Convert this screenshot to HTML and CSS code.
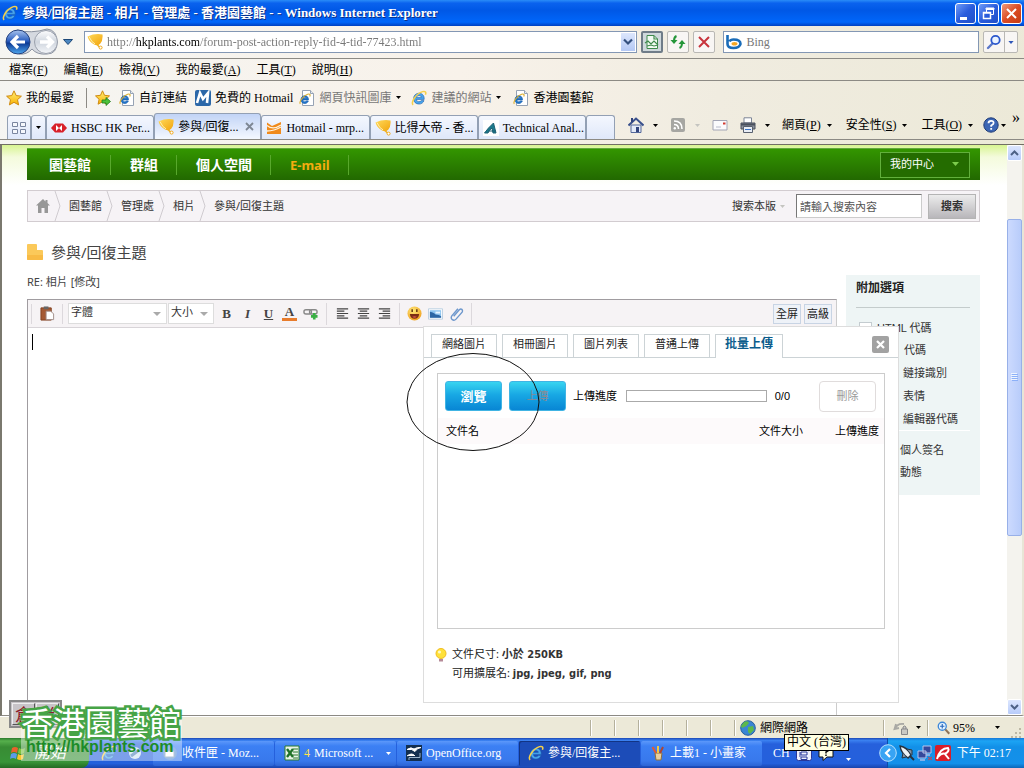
FILE: index.html
```html
<!DOCTYPE html>
<html lang="zh-Hant">
<head>
<meta charset="utf-8">
<title>參與/回復主題 - 相片 - 管理處 - 香港園藝館</title>
<link rel="stylesheet" href="styles.css">
</head>
<body>
<svg class="sprite" width="0" height="0" aria-hidden="true">
  <defs>
    <linearGradient id="gBlue" x1="0" y1="0" x2="0" y2="1"><stop offset="0" stop-color="#a9c4ee"/><stop offset=".45" stop-color="#2c5fc0"/><stop offset=".55" stop-color="#0c3a96"/><stop offset="1" stop-color="#4fa8ee"/></linearGradient>
    <linearGradient id="gGrey" x1="0" y1="0" x2="0" y2="1"><stop offset="0" stop-color="#fdfdfe"/><stop offset=".5" stop-color="#cfd5de"/><stop offset="1" stop-color="#f4f6f9"/></linearGradient>
    <linearGradient id="gGold" x1="0" y1="0" x2="1" y2="1"><stop offset="0" stop-color="#ffd95a"/><stop offset="1" stop-color="#f2a40c"/></linearGradient>
    <linearGradient id="gStar" x1="0" y1="0" x2="0" y2="1"><stop offset="0" stop-color="#fff07a"/><stop offset="1" stop-color="#f9b100"/></linearGradient>
    <radialGradient id="gSmile" cx=".4" cy=".3" r=".8"><stop offset="0" stop-color="#ffe878"/><stop offset="1" stop-color="#ee9a18"/></radialGradient>
    <symbol id="ie" viewBox="0 0 16 16"><path d="M13.200 9.400H5.400c.1 1.500 1.200 2.300 2.600 2.300 1 0 1.800-.4 2.200-1.100h2.800c-.8 2.300-2.700 3.500-5 3.500-3.200 0-5.400-2.200-5.400-5.400 0-3.200 2.200-5.500 5.400-5.500 3.400 0 5.400 2.300 5.200 6.200zM5.500 7.400h4.800C10.200 6.200 9.300 5.500 8 5.500c-1.300 0-2.200.7-2.500 1.900z" fill="#48a4ec" stroke="#1b5fae" stroke-width=".6"/><path d="M2.200 14.800C-.8 13 5 3.500 11.500 1.600c3-.8 4 .8 2.900 3.200" fill="none" stroke="#f6d04a" stroke-width="1.500"/></symbol>
    <symbol id="iedoc" viewBox="0 0 16 16"><path d="M3.500.5h8l3 3v12h-11z" fill="#fff" stroke="#97a3b4"/><path d="M11.500.5v3h3" fill="#e8edf4" stroke="#97a3b4"/><g transform="translate(0 3) scale(.75)"><path d="M12.600 9.200H5.200c.1 1.700 1.200 2.600 2.600 2.600 1 0 1.700-.4 2.200-1.100h2.400c-.8 2.100-2.500 3.300-4.700 3.300-2.900 0-5-2.100-5-5.100 0-3 2.100-5.200 5-5.200 3.100 0 5 2.100 4.900 5.500zM5.300 7.400h4.800C10 6.200 9.100 5.500 7.800 5.500c-1.300 0-2.200.7-2.500 1.900z" fill="#1f78cc" stroke="#1b5fae"/><path d="M1.800 14.600C-.5 12.500 5.500 3.500 11.500 1.700c3-.9 3.900.6 2.800 2.900" fill="none" stroke="#dcae2c" stroke-width="1.500"/></g></symbol>
    <symbol id="pot" viewBox="0 0 16 16"><path d="M.5 2.500Q8-1 15.500.5q.6 6-2.300 9.200-2.900 2.700-6 .8Q2 8 .5 2.500z" fill="url(#gGold)"/><path d="M2 2.600q3 6.500 6 7.200" fill="none" stroke="#fff0b0" stroke-width="1"/><path d="M10 10.500l2.500 2.500" stroke="#f0b020" stroke-width="1.500"/><circle cx="13.600" cy="13.600" r="1.500" fill="#fff" stroke="#f0a818"/></symbol>
    <symbol id="star" viewBox="0 0 16 16"><path d="M8 .8l2.200 4.800 5.200.6-3.900 3.500 1.100 5.200L8 12.300l-4.600 2.600 1.100-5.200L.6 6.200l5.200-.6z" fill="url(#gStar)" stroke="#cf8a10" stroke-linejoin="round"/></symbol>
    <symbol id="arrow" viewBox="0 0 7 4"><path d="M0 0h7L3.500 4z" fill="currentColor"/></symbol>
    <symbol id="lens" viewBox="0 0 16 16"><path d="M2 14l4.500-4.500" stroke="#5a77c8" stroke-width="2.400" stroke-linecap="round"/><circle cx="9.500" cy="6" r="4.200" fill="#eaf3ff" stroke="#2b57cc" stroke-width="1.800"/></symbol>
  </defs>
</svg>

<header class="titlebar">
  <svg class="ico"><use href="#ie"/></svg>
  <h1 class="window-title">參與/回復主題 - 相片 - 管理處 - 香港園藝館 - - Windows Internet Explorer</h1>
  <div class="winbtns">
    <button class="winbtn" aria-label="最小化"><svg viewBox="0 0 19 19"><path d="M4 13h7v3H4z" fill="#fff"/></svg></button>
    <button class="winbtn" aria-label="還原"><svg viewBox="0 0 19 19"><path d="M7.500 8V4.500h7v6H12M7 4h8v1.500H7z" fill="none" stroke="#fff"/><path d="M4.500 8.500h7v6h-7zM4 9h8" fill="none" stroke="#fff" stroke-width="1.500"/></svg></button>
    <button class="winbtn close" aria-label="關閉"><svg viewBox="0 0 19 19"><path d="M5 5l9 9M14 5l-9 9" stroke="#fff" stroke-width="2"/></svg></button>
  </div>
</header>

<div class="chrome">
  <div class="addressrow">
    <svg class="navbtns" viewBox="0 0 72 28" role="img" aria-label="上一頁 下一頁"><path d="M12 2q14 4 30-1 10 1 10 13T42 26q-10 1-15-5-5 6-13 5z" fill="#d5d9e0" stroke="#8c93a0"/><circle cx="13" cy="14" r="12" fill="url(#gBlue)" stroke="#26427e"/><circle cx="41" cy="14" r="11.500" fill="url(#gGrey)" stroke="#9aa0ac"/><path d="M20 14H8M13 8l-6 6 6 6" fill="none" stroke="#fff" stroke-width="3.200"/><path d="M35 14h11M42 8.500l5.500 5.500-5.500 5.500" fill="none" stroke="#fff" stroke-width="3.400"/><path d="M58.500 11.500h9L63 16.500z" fill="#4a86c0" stroke="#1d4878"/></svg>
    <div class="field url">
      <svg class="ico"><use href="#pot"/></svg>
      <input class="url-input" aria-label="網址" value="http://hkplants.com/forum-post-action-reply-fid-4-tid-77423.html">
      <button class="urldrop" aria-label="網址清單"><svg viewBox="0 0 10 8"><path d="M1 1.500l4 4 4-4" fill="none" stroke="#34507e" stroke-width="2.200"/></svg></button>
    </div>
    <button class="toolbtn pressed" aria-label="相容性檢視"><svg class="ico" viewBox="0 0 16 16"><path d="M3 1.500h7l3.500 3.500v9.500H3z" fill="#f2fbf2" stroke="#3f8a4d"/><path d="M10 1.500V5h3.500M1 9l3-2 3 3 3-3 4 4M3 12l4-1 3 1 4-1" fill="none" stroke="#3f8a4d" stroke-width="1.200"/></svg></button>
    <button class="toolbtn" aria-label="重新整理"><svg class="ico" viewBox="0 0 16 16"><path d="M6.500 2Q4 3 4 7" fill="none" stroke="#24963a" stroke-width="2"/><path d="M.5 6h7L4 10zM8.500 10h7L12 6z" fill="#24963a"/><path d="M9.500 14Q12 13 12 9" fill="none" stroke="#24963a" stroke-width="2"/></svg></button>
    <button class="toolbtn" aria-label="停止"><svg class="ico" viewBox="0 0 16 16"><path d="M3 3l10 10M13 3L3 13" stroke="#c8343c" stroke-width="2"/></svg></button>
    <div class="field search">
      <svg class="ico" viewBox="0 0 16 16"><path d="M1.500 1v9q0 4 6 4t7-4q0-4.500-7-4.500-3 0-4 2" fill="none" stroke="#1a6cb8" stroke-width="2.600"/><ellipse cx="8.500" cy="9.800" rx="3" ry="1.800" fill="#f5a623"/></svg>
      <input class="plain-input" aria-label="搜尋" placeholder="Bing">
    </div>
    <div class="toolbtn split"><button class="bare" aria-label="搜尋"><svg class="ico"><use href="#lens"/></svg></button><button class="bare drop" aria-label="搜尋選項"><svg class="arrow blue"><use href="#arrow"/></svg></button></div>
  </div>

  <nav class="menubar">
    <button>檔案(<u>F</u>)</button><button>編輯(<u>E</u>)</button><button>檢視(<u>V</u>)</button><button>我的最愛(<u>A</u>)</button><button>工具(<u>T</u>)</button><button>說明(<u>H</u>)</button>
  </nav>

  <div class="favbar">
    <button class="fav first"><svg class="ico"><use href="#star"/></svg>我的最愛</button>
    <button class="fav" aria-label="加到我的最愛列"><svg class="ico" viewBox="0 0 16 16"><path d="M7.500.8l2 4.500 5 .6-3.700 3.400 1 4.900-4.300-2.500-4.400 2.500 1-4.900L.5 5.900l5-.6z" fill="url(#gStar)" stroke="#cf8a10"/><path d="M7 10h4V7.500l4.500 4-4.500 4V13H7z" fill="#4cc23a" stroke="#1f7c1c" stroke-width=".8"/></svg></button>
    <a class="fav" href="#"><svg class="ico"><use href="#iedoc"/></svg>自訂連結</a>
    <a class="fav" href="#"><svg class="ico" viewBox="0 0 16 16"><rect width="16" height="16" rx="2" fill="#2b67a8"/><path d="M2 13L5 3l3 6 5-6-1 10" fill="none" stroke="#fff" stroke-width="2.600"/></svg>免費的 Hotmail</a>
    <a class="fav dim" href="#"><svg class="ico"><use href="#iedoc"/></svg>網頁快訊圖庫<svg class="arrow"><use href="#arrow"/></svg></a>
    <a class="fav dim" href="#"><svg class="ico"><use href="#ie"/></svg>建議的網站<svg class="arrow"><use href="#arrow"/></svg></a>
    <a class="fav" href="#"><svg class="ico"><use href="#iedoc"/></svg>香港園藝館</a>
  </div>

  <div class="tabrow">
    <div class="tabs">
      <button class="tab quick" aria-label="快速索引標籤"><svg class="ico" viewBox="0 0 16 16"><path d="M1.500 2.500h5v4h-5zM9.500 2.500h5v4h-5zM1.500 9.500h5v4h-5zM9.500 9.500h5v4h-5z" fill="#f6f8fc" stroke="#7a86a0"/></svg></button>
      <button class="tab qdrop" aria-label="索引標籤清單"><svg class="arrow"><use href="#arrow"/></svg></button>
      <button class="tab"><svg class="ico" viewBox="0 0 16 16"><path d="M4 3.500h8l4 4.500-4 4.500H4L0 8z" fill="#d8202a"/><path d="M5 5l6 6V5l-6 6z" fill="#fff"/></svg><span>HSBC HK Per...</span></button>
      <button class="tab current"><svg class="ico"><use href="#pot"/></svg><span>參與/回復...</span><svg class="tabx" viewBox="0 0 9 9"><path d="M1 1l7 7M8 1L1 8" stroke="#7e8794" stroke-width="1.800"/></svg></button>
      <button class="tab"><svg class="ico" viewBox="0 0 16 16"><path d="M1 2.500l5 3.500 9-4v12H1z" fill="#f08a1c"/><path d="M1 5.500q6 5 14-.5M1 11q7 0 14-4" stroke="#fff2dc" fill="none" stroke-width="1.300"/></svg><span>Hotmail - mrp...</span></button>
      <button class="tab"><svg class="ico"><use href="#pot"/></svg><span>比得大帝 - 香...</span></button>
      <button class="tab"><svg class="ico" viewBox="0 0 16 16"><path d="M0 0h16v16H0z" fill="#fff"/><path d="M1.500 13Q5 8 10.500 3l2.500 10h-3L9 8q-3 2-4 5zM5 11h8" fill="#1c7a8c" stroke="#1c6074"/></svg><span>Technical Anal...</span></button>
      <button class="tab new" aria-label="新索引標籤"></button>
    </div>
    <div class="commands">
      <button class="cmd" aria-label="首頁"><svg class="ico" viewBox="0 0 16 16"><path d="M3 8h10v7.500H3z" fill="#e3eaf8" stroke="#54689a"/><path d="M.5 8.500L8 1.500l7.500 7" fill="none" stroke="#39508c" stroke-width="2"/><path d="M3 1h2v4H3zM8 10h3v5H8z" fill="#32447c"/></svg><svg class="arrow"><use href="#arrow"/></svg></button>
      <button class="cmd" aria-label="摘要"><svg class="ico" viewBox="0 0 16 16"><rect x="1" y="1" width="14" height="14" rx="2" fill="#a6a6a2"/><path d="M4 4q8 0 8 8M4 7.500q4.500 0 4.500 4.500" fill="none" stroke="#fff" stroke-width="1.600"/><circle cx="4.800" cy="11.300" r="1.200" fill="#fff"/></svg><svg class="arrow pale"><use href="#arrow"/></svg></button>
      <button class="cmd" aria-label="讀取郵件"><svg class="ico" viewBox="0 0 16 16"><path d="M1 3.500h14v9.500H1z" fill="#fbfbfd" stroke="#a3a5b5"/><path d="M11 5.500h2.500v2H11z" fill="#d23a30"/><path d="M4 10h5" stroke="#b9bccb"/></svg></button>
      <button class="cmd" aria-label="列印"><svg class="ico" viewBox="0 0 16 16"><path d="M4 .8h7.500V6H4z" fill="#fff" stroke="#7c8596"/><path d="M1 6h14v6H1z" fill="#8c929c" stroke="#4a515e"/><path d="M1 6.500h14v2H1z" fill="#4a515e"/><path d="M3.500 9.500h9v6h-9z" fill="#e9eef6" stroke="#59616f"/><path d="M5 12.500h6" stroke="#3a74c8"/></svg><svg class="arrow"><use href="#arrow"/></svg></button>
      <button class="cmd"><span>網頁(<u>P</u>)</span><svg class="arrow"><use href="#arrow"/></svg></button>
      <button class="cmd"><span>安全性(<u>S</u>)</span><svg class="arrow"><use href="#arrow"/></svg></button>
      <button class="cmd"><span>工具(<u>O</u>)</span><svg class="arrow"><use href="#arrow"/></svg></button>
      <button class="cmd help" aria-label="說明"><svg class="ico" viewBox="0 0 16 16"><circle cx="8" cy="8" r="7.200" fill="#3c66b4" stroke="#1f3c78"/><path d="M5.500 6.200q0-2.400 2.600-2.400t2.500 2.200Q10.600 7.300 8.200 8.500v1.300M8.200 11v1.800" fill="none" stroke="#fff" stroke-width="1.800"/></svg><svg class="arrow"><use href="#arrow"/></svg></button>
      <button class="more" aria-label="更多">»</button>
    </div>
  </div>
</div>

<div class="viewport">
  <main class="page">
    <nav class="sitenav">
      <a href="#">園藝館</a><a href="#">群組</a><a href="#">個人空間</a><a class="mail" href="#">E-mail</a>
      <button class="mycenter">我的中心<svg class="arrow"><use href="#arrow"/></svg></button>
    </nav>
    <div class="crumbbar">
      <svg class="home" viewBox="0 0 14 14"><path d="M7 0L0 6.500h2V14h3.500V9h3v5H12V6.500h2L11.500 4V1h-2v1.500z" fill="#979797"/></svg>
      <svg class="sep" viewBox="0 0 7 30"><path d="M1 0l5 15-5 15" fill="none" stroke="#cfcbd0"/></svg>
      <a href="#">園藝館</a>
      <svg class="sep" viewBox="0 0 7 30"><path d="M1 0l5 15-5 15" fill="none" stroke="#cfcbd0"/></svg>
      <a href="#">管理處</a>
      <svg class="sep" viewBox="0 0 7 30"><path d="M1 0l5 15-5 15" fill="none" stroke="#cfcbd0"/></svg>
      <a href="#">相片</a>
      <svg class="sep" viewBox="0 0 7 30"><path d="M1 0l5 15-5 15" fill="none" stroke="#cfcbd0"/></svg>
      <span>參與/回復主題</span>
      <form class="sitesearch">
        <button type="button" class="scope">搜索本版<svg class="arrow pale"><use href="#arrow"/></svg></button>
        <input aria-label="搜索內容" placeholder="請輸入搜索內容">
        <button type="button" class="go">搜索</button>
      </form>
    </div>

    <div class="columns">
      <section class="composer">
        <h2><svg class="note" viewBox="0 0 16 16"><path d="M1 0h8q1 0 1 1v5h5q1 0 1 1v8q0 1-1 1H1q-1 0-1-1V1q0-1 1-1z" fill="#fbc95a"/><path d="M0 11h16v4q0 1-1 1H1q-1 0-1-1z" fill="#f8bb45"/></svg>參與/回復主題</h2>
        <p class="re">RE: 相片 [<a href="#">修改</a>]</p>
        <div class="editor">
          <div class="toolbar">
            <button class="tb paste" aria-label="貼上"><svg class="ico" viewBox="0 0 16 16"><path d="M1 2h11v13H1z" fill="#a55a34" stroke="#82401f"/><path d="M4 .5h5v3H4z" fill="#666"/><path d="M6.500 5.500h5l3 3v6h-8z" fill="#fff" stroke="#a08d88"/></svg></button>
            <label class="sel font"><select aria-label="字體"><option>字體</option></select></label>
            <label class="sel size"><select aria-label="大小"><option>大小</option></select></label>
            <button class="tb"><b>B</b></button>
            <button class="tb"><i>I</i></button>
            <button class="tb"><u>U</u></button>
            <button class="tb color">A</button>
            <button class="tb" aria-label="插入連結"><svg class="ico" viewBox="0 0 16 16"><rect x="1" y="4" width="8" height="4.500" rx="2.200" fill="none" stroke="#888" stroke-width="1.500"/><rect x="7" y="4" width="8" height="4.500" rx="2.200" fill="none" stroke="#888" stroke-width="1.500"/><path d="M8.500 11h7M12 7.500v7" stroke="#3aaf44" stroke-width="2.800"/></svg></button>
            <span class="line wide"></span>
            <button class="tb" aria-label="靠左"><svg class="ico" viewBox="0 0 16 16"><path d="M2 3h12M2 5.500h8M2 8h12M2 10.500h8M2 13h12" stroke="#444" stroke-width="1.300"/></svg></button>
            <button class="tb" aria-label="置中"><svg class="ico" viewBox="0 0 16 16"><path d="M2 3h12M4 5.500h8M2 8h12M4 10.500h8M2 13h12" stroke="#444" stroke-width="1.300"/></svg></button>
            <button class="tb" aria-label="靠右"><svg class="ico" viewBox="0 0 16 16"><path d="M2 3h12M6 5.500h8M2 8h12M6 10.500h8M2 13h12" stroke="#444" stroke-width="1.300"/></svg></button>
            <span class="line"></span>
            <button class="tb" aria-label="表情"><svg class="ico" viewBox="0 0 16 16"><circle cx="8" cy="8" r="7.500" fill="url(#gSmile)"/><path d="M3 8.500h10q-.5 5-5 5t-5-5z" fill="#7c2d12"/><path d="M5.500 11.500q2.500-1 5 0-2.500 2-5 0z" fill="#e2574c"/><path d="M5.500 3.500v3M10.500 3.500v3" stroke="#5a2c0a" stroke-width="1.500"/></svg></button>
            <button class="tb" aria-label="圖片"><svg class="ico" viewBox="0 0 16 16"><path d="M.5 3h15v11H.5z" fill="#fff" stroke="#b9cde0"/><path d="M2 4.500h12v8H2z" fill="#8cc4f0"/><path d="M2 12.500V6q5 1 6 3 4 0 6 2v1.500z" fill="#2c66a4"/><path d="M8 6h5v2H8z" fill="#e8f5ff"/></svg></button>
            <button class="tb" aria-label="附件"><svg class="ico" viewBox="0 0 16 16"><path d="M5 11l6-7q1.500-1.500 2.700-.4T14 6.500L7.500 14q-2 2-4 .5T3 10.500L9.500 3" fill="none" stroke="#6d97cc" stroke-width="1.500"/></svg></button>
            <span class="line"></span>
            <div class="modes"><button>全屏</button><button>高級</button></div>
          </div>
          <textarea class="message" aria-label="內容"></textarea>
          <span class="caret"></span>

          <div class="dialog">
            <div class="dtabs">
              <button>網絡圖片</button><button>相冊圖片</button><button>圖片列表</button><button>普通上傳</button><button class="on">批量上傳</button>
              <button class="x" aria-label="關閉"><svg viewBox="0 0 17 17"><rect width="17" height="17" rx="2" fill="#a2a2a2"/><path d="M5 5l7 7M12 5l-7 7" stroke="#fff" stroke-width="2.200"/></svg></button>
            </div>
            <div class="upload">
              <div class="urow">
                <button class="blue-btn">瀏覽</button>
                <button class="blue-btn off">上傳</button>
                <span class="ulabel">上傳進度</span>
                <span class="bar" role="progressbar" aria-label="上傳進度"></span>
                <span class="count">0/0</span>
                <button class="del">刪除</button>
              </div>
              <table class="files">
                <thead><tr><th class="name">文件名</th><th class="fsize">文件大小</th><th class="prog">上傳進度</th></tr></thead>
              </table>
            </div>
            <div class="tips">
              <svg class="bulb" viewBox="0 0 12 14"><circle cx="6" cy="5.500" r="5" fill="#ffe13a" stroke="#f0bc20"/><circle cx="4.500" cy="4" r="1.600" fill="#fff9c4"/><path d="M4 11h4v2.500H4z" fill="#b58a98"/></svg>
              <p>文件尺寸: <b>小於 250KB</b><br>可用擴展名: <b>jpg, jpeg, gif, png</b></p>
            </div>
          </div>
          <svg class="ring" viewBox="0 0 134 98"><ellipse cx="67" cy="49" rx="66" ry="48.500" fill="none" stroke="#111"/></svg>
        </div>
      </section>

      <aside class="options">
        <h3>附加選項</h3>
        <label class="first"><input type="checkbox">HTML 代碼</label>
        <label class="r2">代碼</label>
        <label>鏈接識別</label>
        <label>表情</label>
        <label>編輯器代碼</label>
        <div class="more-opts"><label>個人簽名</label><label>動態</label></div>
      </aside>
    </div>
  </main>
  <div class="scrollbar">
    <button aria-label="向上"><svg viewBox="0 0 9 6"><path d="M1 5l3.500-3.500L8 5" fill="none" stroke="#4d6185" stroke-width="2"/></svg></button>
    <div class="track"><div class="thumb"><svg viewBox="0 0 7 8"><path d="M0 .5h6M0 2.500h6M0 4.500h6M0 6.500h6" stroke="#eef4fe"/><path d="M1 1.500h6M1 3.500h6M1 5.500h6M1 7.500h6" stroke="#8cb0f8"/></svg></div></div>
    <button aria-label="向下"><svg viewBox="0 0 9 6"><path d="M1 1l3.500 3.500L8 1" fill="none" stroke="#4d6185" stroke-width="2"/></svg></button>
  </div>
</div>

<footer class="statusbar">
  <span class="cell"></span><span class="cell"></span><span class="cell"></span><span class="cell"></span><span class="cell"></span><span class="cell"></span>
  <span class="cell zone"><svg class="ico" viewBox="0 0 16 16"><circle cx="8" cy="8" r="7.300" fill="#3a85d4" stroke="#285f9e"/><path d="M4 2q4-2 5 1L6.500 6 2 8 1 6zM8 7l5-1 1 4-4 4-2-2z" fill="#5cb84c"/></svg>網際網路</span>
  <span class="cell lock"><svg class="ico" viewBox="0 0 16 16"><path d="M2 9q2-6 9-5M3 4L1.500 9 6 8" fill="none" stroke="#a9a9a4" stroke-width="1.800"/><path d="M8.500 9h6v5.500h-6zM10 9V7q1.500-2 3 0v2" fill="#c9c9c4" stroke="#87878a"/></svg><svg class="arrow"><use href="#arrow"/></svg></span>
  <span class="cell zoom"><svg class="ico" viewBox="0 0 16 16"><path d="M9 9l5 5.500" stroke="#8f7358" stroke-width="2.400"/><circle cx="6" cy="6" r="4.600" fill="#e4f3ff" stroke="#3b86d8" stroke-width="1.500"/><path d="M3.500 6h5M6 3.500v5" stroke="#2766bc" stroke-width="1.300"/></svg>95%<svg class="arrow"><use href="#arrow"/></svg></span>
  <svg class="grip" viewBox="0 0 11 11"><path d="M9 1h2v2H9zM5 5h2v2H5zM9 5h2v2H9zM1 9h2v2H1zM5 9h2v2H5zM9 9h2v2H9z" fill="#bdb9a6"/></svg>
</footer>

<footer class="taskbar">
  <button class="start"><svg class="flag" viewBox="0 0 18 18"><path d="M2 4q3-2 6 0L7 9Q4 7 1 9z" fill="#e8622c"/><path d="M9 4q3 2 6 0l-1 5q-3 2-6 0z" fill="#7fc241"/><path d="M1 10q3-2 6 0l-1 5q-3-2-6 0z" fill="#5b9bea"/><path d="M8 10q3 2 6 0l-1 5q-3 2-6 0z" fill="#f8c52c"/></svg><i>開始</i></button>
  <div class="quicklaunch"><svg class="ico"><use href="#ie"/></svg><svg class="ico" viewBox="0 0 16 16"><circle cx="8" cy="8" r="6" fill="#cde3f4"/><path d="M4 11l8-6" stroke="#4c80ba" stroke-width="3"/></svg></div>
  <button class="task"><svg class="ico" viewBox="0 0 16 16"><circle cx="8" cy="8" r="7" fill="#5a91d8"/><path d="M3 6h9v6H3z" fill="#fff" stroke="#839cbd"/></svg><span>收件匣 - Moz...</span></button>
  <button class="task"><svg class="ico" viewBox="0 0 16 16"><path d="M1 1h14v14H1z" fill="#e8f3e6" stroke="#2b7b31"/><path d="M9 4h5M9 7h5M9 10h5M9 13h5" stroke="#2b7b31"/><path d="M3 4l6 8M9 4l-6 8" stroke="#207228" stroke-width="2.400"/></svg><b>4</b><span>Microsoft ...</span><svg class="arrow"><use href="#arrow"/></svg></button>
  <button class="task"><svg class="ico" viewBox="0 0 16 16"><path d="M0 0h16v16H0z" fill="#132f50"/><path d="M1 4.500q4-3 7-.5 3-2 7-1.500-4 .5-6 4-3-3-8-2zM1 11q5-4 8 0" fill="#fff" stroke="#fff"/><path d="M3 15v-2.500h11V8" fill="none" stroke="#9cb4cc"/></svg><span>OpenOffice.org</span></button>
  <button class="task active"><svg class="ico"><use href="#ie"/></svg><span>參與/回復主...</span></button>
  <button class="task"><svg class="ico" viewBox="0 0 16 16"><path d="M5 8h7l-1 7H6z" fill="#e7cfa0" stroke="#8f703c"/><path d="M6 8L2.500 2" stroke="#e35a30" stroke-width="2"/><path d="M8 8V1" stroke="#f0c840" stroke-width="2"/><path d="M10 8l3-6" stroke="#b04630" stroke-width="2"/></svg><span>上載1 - 小畫家</span></button>
  <div class="lang"><span>CH</span><svg class="ico" viewBox="0 0 16 16"><rect x=".5" y=".5" width="15" height="15" rx="2" fill="#eef0fc" stroke="#27379a"/><path d="M8 2L3 6M8 2l5 4M5 7h6v3H5zM5 12h6v2.500H5zM4 7v5" fill="none" stroke="#27379a"/></svg><svg class="ico" viewBox="0 0 16 16"><path d="M1 1h14v11H9l-4 3.500V12H1z" fill="#ffffe6" stroke="#111"/><path d="M5.500 5q0-2 2.500-2t2.500 2Q10.500 6 8 7v1.500M8 9.500V11" fill="none" stroke="#111" stroke-width="1.500"/></svg><svg class="arrow"><use href="#arrow"/></svg></div>
  <div class="tray">
    <svg class="chev" viewBox="0 0 18 18"><circle cx="9" cy="9" r="8.300" fill="#38a4f4" stroke="#b7e1fd"/><path d="M11 5L7 9l4 4" fill="none" stroke="#fff" stroke-width="2.200"/></svg>
    <svg class="ico" viewBox="0 0 16 16"><path d="M1 1q7 1 11 9l-3 3Q2 8 1 1z" fill="#eef3f7" stroke="#26323e" stroke-width="1.400"/><path d="M4 8l-1 5 4-1M8 4l5 1v5" fill="#8594a4" stroke="#26323e"/><path d="M11 11l4 4" stroke="#26323e" stroke-width="2"/></svg>
    <svg class="ico" viewBox="0 0 16 16"><path d="M6 1h8v7H6zM1 6h8v7H1z" fill="#34489c" stroke="#b9c5ec"/><path d="M3 15h5M9 10h4" stroke="#a9bbe8" stroke-width="1.500"/><path d="M11 12l4 3M15 12l-4 3" stroke="#e23a36"/></svg>
    <svg class="ico" viewBox="0 0 16 16"><rect width="16" height="16" rx="2" fill="#d81e28"/><path d="M2 14Q5 3 13 3q2 3-3 6l4 5M3 12q4-5 8-3" fill="none" stroke="#fff" stroke-width="2"/></svg>
    <time>下午 02:17</time>
  </div>
</footer>

<div class="ime"><span>倉</span><span>半</span></div>
<div class="watermark"><strong>香港園藝館</strong><em>http://hkplants.com</em></div>
<div class="tooltip" role="tooltip">中文 (台灣)</div>
</body>
</html>
```
FILE: styles.css
```css
* { box-sizing: border-box; }
body {
  margin: 0;
  height: 100vh;
  display: flex;
  flex-direction: column;
  position: relative;
  overflow: hidden;
  font: 12px/16px "Liberation Serif", "Noto Sans CJK TC", serif;
  color: #000;
  background: #fff;
}
button, input, select, textarea { font: inherit; color: inherit; margin: 0; padding: 0; }
button { background: none; border: 0; white-space: nowrap; }
a { color: inherit; text-decoration: none; }
h1, h2, h3, p { margin: 0; font-weight: normal; }
.sprite { position: absolute; }
.ico { width: 16px; height: 16px; flex: none; display: block; }
.arrow { width: 5px; height: 3px; flex: none; color: #000; }
.arrow.blue { color: #2f57b8; width: 6px; }
.arrow.pale { color: #c4c4c0; }

.titlebar {
  height: 26px;
  flex: none;
  display: flex;
  align-items: center;
  gap: 4px;
  padding: 0 2px;
  background: linear-gradient(#2a8cf8, #0a62ee 12%, #0058e6 40%, #0066fa 85%, #0040c0);
  color: #fff;
}
.window-title { flex: 1; font-size: 13px; line-height: 18px; font-weight: bold; white-space: nowrap; text-shadow: 1px 1px #0b2f87; }
.winbtns { display: flex; gap: 2px; }
.winbtn { width: 21px; height: 21px; border: 1px solid #fff; border-radius: 3px; background: linear-gradient(135deg, #6f9cf8, #2a5cdc 50%, #2050c8); }
.winbtn svg { width: 19px; height: 19px; display: block; }
.winbtn.close { background: linear-gradient(135deg, #f09a7c, #dc4c24 50%, #c43c14); }

.chrome { flex: none; background: linear-gradient(100deg, #f5f5f2, #f8f2ea 45%, #f0ece0 70%, #ece9d8); border-bottom: 1px solid #716f64; }
.addressrow { height: 33px; display: flex; align-items: center; gap: 4px; padding: 0 6px 0 5px; border-bottom: 1px solid #8c8a84; }
.navbtns { width: 72px; height: 28px; flex: none; margin-right: 3px; }
.field { height: 22px; display: flex; align-items: center; background: #fff; border: 1px solid #8397b4; padding: 1px 1px 1px 2px; }
.field input { flex: 1; min-width: 0; border: 0; outline: 0; background: transparent; line-height: 18px; padding: 0 4px; }
.field.url { flex: 556 1 0; }
.field .url-input { font-size: 12px; color: transparent; background: linear-gradient(90deg, #777 32px, #000 32px 96px, #777 96px); background-clip: text; -webkit-background-clip: text; }
.field.search { flex: 254 1 0; margin-left: 4px; }
.plain-input::placeholder { color: #777; opacity: 1; }
.urldrop { width: 14px; height: 18px; background: linear-gradient(#dce6fc, #b4c8f4); display: flex; align-items: center; justify-content: center; }
.urldrop svg { width: 10px; height: 8px; }
.toolbtn { width: 22px; height: 22px; border: 1px solid #b9b8b4; border-radius: 2px; background: #f8f6f4; display: flex; align-items: center; justify-content: center; flex: none; }
.toolbtn.pressed { background: #cfd8dc; border: 2px solid #6f7c88; }
.toolbtn.split { width: 35px; }
.bare { height: 100%; width: 21px; display: flex; align-items: center; justify-content: center; }
.bare.drop { width: 13px; border-left: 1px solid #b9b8b4; }

.menubar { height: 22px; display: flex; align-items: center; gap: 16px; padding-left: 9px; border-bottom: 1px solid #8c8a84; }
.favbar { height: 33px; display: flex; align-items: center; gap: 8px; padding-left: 6px; }
.fav { display: flex; align-items: center; gap: 4px; white-space: nowrap; }
.fav.first { border-right: 1px solid #8c8a84; padding-right: 12px; height: 20px; }
.fav.dim { color: #777; }
.fav.dim .ico { margin-left: -2px; }
.fav .arrow { margin: 0 4px 0 1px; }

.tabrow { height: 30px; display: flex; align-items: flex-start; }
.tabs { flex: 615 1 0; height: 26px; display: flex; align-items: flex-end; padding-left: 7px; border-bottom: 1px solid #8c8a84; min-width: 0; }
.tab { flex: 108 1 0; min-width: 0; height: 24px; display: flex; align-items: center; gap: 4px; padding: 0 1px 0 4px; border: 1px solid #93a0b4; border-bottom: 0; border-radius: 3px 3px 0 0; background: linear-gradient(#f4f7fe, #dfe8fa); overflow: hidden; }
.tab span { flex: 1; text-align: left; }
.tab.current { height: 26px; padding-left: 3px; background: linear-gradient(#c2d4f6, #f4f8ff); }
.tab.quick { flex: 0 0 24px; padding: 0 3px; }
.tab.qdrop { flex: 0 0 15px; padding: 0; justify-content: center; }
.tab.new { flex: 0 0 29px; }
.tabx { width: 9px; height: 9px; flex: none; margin-right: 5px; }
.commands { flex: 0 1 409px; height: 26px; display: flex; align-items: center; border-bottom: 1px solid #8c8a84; padding: 0 4px 3px 13px; min-width: 0; }
.cmd { display: flex; align-items: center; gap: 6px; margin-right: 14px; }
.cmd:nth-child(-n+4) { gap: 9px; margin-right: 12px; }
.cmd.help { gap: 2px; margin: 0 0 0 -4px; }
.more { align-self: flex-start; margin-left: auto; font-size: 16px; line-height: 8px; }

.viewport { flex: 1; min-height: 0; display: flex; border-left: 2px solid #7a786e; border-right: 2px solid #e8e5d6; border-bottom: 1px solid #8c8a84; background: #fff; margin-bottom: 1px; }
.page { flex: 1; min-width: 0; overflow: hidden; padding: 3px 27px 0 25px; display: flex; flex-direction: column; font: 11px/16px "Noto Sans", "Noto Sans CJK TC", sans-serif; color: #333; background: linear-gradient(#d8f592, #f4fbdc 12px, #fff 40px); }
.sitenav { height: 32px; flex: none; display: flex; align-items: center; border-top: 1px solid #62a83c; background: linear-gradient(#339600, #226800); color: #fff; font-weight: bold; }
.sitenav a { font-size: 14px; line-height: 20px; padding: 0 18px 0 19px; border-right: 1px solid #58a82c; white-space: nowrap; }
.sitenav a:first-child { padding: 0 19px 0 22px; }
.sitenav .mail { color: #f4ac10; font-size: 13px; }
.mycenter { margin-left: auto; margin-right: 10px; width: 90px; height: 26px; border: 1px solid #62b03c; background: #246c00; font-weight: normal; display: flex; align-items: center; justify-content: space-between; padding: 0 10px 2px 9px; }
.mycenter .arrow { color: #7ccc4c; width: 7px; height: 4px; }
.crumbbar { height: 32px; flex: none; margin-top: 10px; border: 1px solid #d2ccd0; background: #f6f3f6; display: flex; align-items: center; padding: 0 3px 0 8px; white-space: nowrap; }
.home { width: 14px; height: 14px; }
.sep { width: 7px; height: 30px; margin: 0 8px 0 4px; flex: none; }
.sitesearch { margin-left: auto; display: flex; align-items: center; }
.scope { display: flex; align-items: center; gap: 4px; margin-right: 11px; }
.sitesearch input { width: 126px; height: 24px; border: 1px solid #ccc; border-top-color: #777; border-left-color: #777; background: #fff; padding: 0 3px; margin-right: 6px; }
.sitesearch input::placeholder { color: #555; opacity: 1; }
.go { width: 48px; height: 25px; border: 1px solid #b4b4b4; background: linear-gradient(#ececec, #b8b6ba); font-weight: bold; }
.columns { flex: 1; min-height: 0; display: flex; gap: 9px; align-items: flex-start; }
.composer { flex: 1; align-self: stretch; min-width: 0; display: flex; flex-direction: column; position: relative; }
h2 { display: flex; align-items: center; gap: 8px; font-size: 15px; line-height: 24px; margin-top: 18px; color: #444; }
.note { width: 16px; height: 16px; }
.re { margin-top: 10px; color: #444; }
.editor { position: relative; flex: 1; margin-top: 9px; border: 1px solid #a09ca0; border-bottom: 0; display: flex; flex-direction: column; border-right-color: #ccc; }
.toolbar { height: 28px; flex: none; display: flex; align-items: center; background: #f6f3f5; border-bottom: 1px solid #d8d4d8; padding: 0 4px 0 3px; }
.tb { width: 21px; height: 20px; display: flex; align-items: center; justify-content: center; font: 13px/16px "Liberation Serif", serif; font-weight: bold; color: #444; flex: none; }
.tb .ico { width: 15px; height: 15px; }
.tb.paste { width: 32px; border: 1px solid #dcd8dc; border-width: 0 1px; margin-right: 1px; }
.tb.color { flex-direction: column; height: 15px; width: 15px; margin: 0 3px; border-bottom: 3px solid #e87c2c; line-height: 12px; }
.line { width: 1px; height: 22px; background: #dcd8dc; margin: 0 4px; }
.line.wide { margin: 0 5px; }
.sel { height: 21px; display: flex; border: 1px solid #ddd; background: #fff; flex: none; }
.sel select { flex: 1; min-width: 0; appearance: none; border: 0; background: transparent; padding: 0 0 3px 2px; outline: 0; line-height: 16px; }
.sel::after { content: ""; align-self: center; border: 4px solid transparent; border-top-color: #aaa; border-bottom: 0; margin-right: 5px; }
.sel.font { width: 99px; margin: 0 1px 0 4px; }
.sel.size { width: 46px; margin-right: 2px; }
.modes { display: flex; gap: 3px; margin-left: auto; }
.modes button { height: 20px; border: 1px solid #c8d4e4; background: #eef2f8; padding: 0 2px; color: #222; }
.message { flex: 1; border: 0; outline: 0; resize: none; width: 100%; background: #fff; }
.caret { position: absolute; left: 4px; top: 34px; width: 1px; height: 16px; background: #000; }

.dialog { position: absolute; left: 395px; top: 26px; width: 476px; min-height: 377px; background: #fff; border: 1px solid #ddd; padding: 7px 0 0; display: flex; flex-direction: column; z-index: 2; }
.dtabs { display: flex; align-items: flex-start; gap: 5px; padding: 0 9px 0 7px; height: 24px; border-bottom: 1px solid #ccd3d6; }
.dtabs > button { width: 66px; height: 23px; border: 1px solid #ccd3d6; border-bottom: 0; background: #fff; color: #222; padding-bottom: 4px; }
.dtabs > .on { width: 68px; height: 24px; color: #0a5c8c; font-weight: bold; font-size: 12px; padding-bottom: 5px; }
.dtabs > .x { margin-left: auto; width: 17px; height: 17px; border: 0; padding: 0; margin-top: 2px; }
.x svg { width: 17px; height: 17px; display: block; }
.upload { margin: 15px 13px 0; height: 256px; border: 1px solid #ccc; color: #000; }
.urow { height: 44px; display: flex; align-items: center; padding: 0 8px 0 7px; }
.blue-btn { width: 57px; height: 30px; border-radius: 3px; border: 1px solid #40b4e4; background: linear-gradient(#38d4f0, #18a8e4 45%, #0886d4); color: #fff; font-weight: bold; font-size: 13px; margin-right: 7px; }
.blue-btn.off { color: #8c8a94; font-weight: normal; font-size: 11px; }
.ulabel { margin-right: 9px; }
.bar { flex: 1; height: 12px; border: 1px solid #aaa; margin-right: 8px; }
.count { font-family: "Liberation Sans", sans-serif; margin-right: 29px; }
.del { width: 57px; height: 31px; border: 1px solid #e0dcdc; border-radius: 4px; color: #999; }
.files { width: 100%; border-collapse: collapse; }
.files th { padding: 5px 5px 5px 8px; font-weight: normal; background: #fdfafb; text-align: right; line-height: 16px; }
.files .name { text-align: left; }
.files .fsize { width: 100px; }
.files .prog { width: 76px; }
.tips { display: flex; gap: 5px; padding: 16px 11px; line-height: 18px; color: #222; }
.tips b { color: #333; font-family: "DejaVu Sans Condensed", "Noto Sans", "Noto Sans CJK TC", sans-serif; }
.bulb { width: 12px; height: 14px; margin-top: 3px; }
.ring { position: absolute; left: 378px; top: 53px; width: 134px; height: 98px; z-index: 3; pointer-events: none; }

.options { width: 134px; flex: none; margin-top: 53px; min-height: 220px; background: #eef5f5; padding: 4px 10px 10px; }
.options h3 { font-weight: bold; font-size: 12px; line-height: 17px; border-bottom: 1px solid #c4cccc; padding-bottom: 11px; margin-bottom: 9px; color: #222; }
.options label { display: flex; align-items: center; gap: 5px; height: 23px; padding-left: 47px; white-space: nowrap; }
.options .first { padding-left: 3px; height: 22px; font-family: "Liberation Sans", "Noto Sans CJK TC", sans-serif; }
.options .first input { width: 13px; height: 13px; appearance: none; border: 1px solid #c4ccd0; background: #fff; }
.options .r2 { padding-left: 48px; height: 22px; }
.more-opts { border-top: 1px solid #fff; padding-top: 8px; }
.more-opts label { padding-left: 44px; height: 22px; }

.scrollbar { width: 15px; flex: none; display: flex; flex-direction: column; background: #f4f3ee; }
.scrollbar button { height: 16px; flex: none; border-radius: 2px; border: 1px solid #fff; background: linear-gradient(#dce6fe, #b8ccfa); display: flex; align-items: center; justify-content: center; }
.scrollbar button svg { width: 9px; height: 6px; }
.track { flex: 1; display: flex; flex-direction: column; padding-top: 58px; }
.thumb { height: 66%; border: 1px solid #98b0e8; border-radius: 2px; background: linear-gradient(90deg, #ccdafe, #b8ccfa); display: flex; align-items: center; justify-content: center; }
.thumb svg { width: 7px; height: 8px; }

.statusbar { height: 21px; flex: none; display: flex; align-items: center; justify-content: flex-end; background: #ece9d8; white-space: nowrap; padding-right: 3px; }
.cell { width: 24px; height: 16px; border-left: 1px solid #b4b09c; box-shadow: inset 1px 0 #fff; display: flex; align-items: center; }
.cell.zone { width: 149px; padding-left: 5px; gap: 4px; }
.cell.lock { width: 44px; padding-left: 9px; gap: 7px; }
.cell.zoom { width: 83px; padding-left: 9px; }
.zoom .arrow { margin-left: auto; margin-right: 10px; }
.zoom .ico { width: 14px; height: 14px; margin-right: 2px; }
.grip { width: 11px; height: 11px; align-self: flex-end; }

.taskbar { height: 30px; flex: none; display: flex; align-items: center; background: linear-gradient(#1c48b4, #3a80f0 8%, #2660dc 20%, #2460dc 85%, #1a44ac); color: #fff; }
.start { width: 89px; height: 30px; background: linear-gradient(#2c7a2c, #56b04c 10%, #388c34 30%, #389438 80%, #246a24); border-radius: 0 8px 8px 0; color: #fff; font-size: 16px; display: flex; align-items: center; gap: 6px; padding-left: 10px; flex: none; }
.flag { width: 18px; height: 18px; }
.quicklaunch { width: 64px; display: flex; gap: 10px; padding-left: 12px; flex: none; }
.task { flex: 0 1 121px; height: 25px; margin-right: 1px; border-radius: 2px; background: linear-gradient(#5c98fa, #3c80f4 20%, #3878ec 80%, #2c64d4); display: flex; align-items: center; gap: 4px; padding: 0 5px 0 9px; overflow: hidden; color: #fff; }
.task .arrow, .lang .arrow { color: #fff; margin-left: auto; }
.task b { color: #ffe24c; font-weight: normal; }
.task.active { background: #1c4cb8; box-shadow: inset 1px 1px #123484; }
.lang { display: flex; align-items: center; gap: 6px; padding-left: 10px; flex: none; }
.lang .arrow { margin: 12px 0 0 6px; }
.tray { margin-left: auto; height: 30px; flex: none; display: flex; align-items: center; gap: 2px; padding-right: 13px; background: linear-gradient(#1878d8, #1ca4f4 10%, #1290e8 30%, #1490ea 85%, #0c66b8); border-left: 1px solid #0c4ca8; }
.chev { width: 18px; height: 18px; margin-left: -9px; }
.tray time { margin-left: 4px; white-space: nowrap; }

.ime { position: absolute; left: 9px; bottom: 40px; display: flex; border: 2px solid #888; background: #c8c4c8; padding: 1px; gap: 1px; }
.ime span { width: 23px; height: 22px; border: 1px solid #eee; border-right-color: #555; border-bottom-color: #555; color: #8c1c2c; font: 17px/20px "Noto Sans CJK TC", sans-serif; text-align: center; }
.watermark { position: absolute; left: 21px; bottom: 7px; width: 161px; display: flex; flex-direction: column; color: #1c8c28; background: linear-gradient(transparent 14px, rgba(255,255,255,.4) 14px); white-space: nowrap; }
.watermark strong { font: 400 32px/32px "Noto Sans CJK TC", sans-serif; color: #fff; -webkit-text-stroke: 5px #46a446; paint-order: stroke fill; }
.watermark em { font: normal bold 16px/20px "Liberation Sans", sans-serif; padding: 0 0 4px 5px; }
.tooltip { position: absolute; left: 784px; bottom: 17px; height: 17px; line-height: 15px; border: 1px solid #000; background: #ffffe1; padding: 0 2px; }
```
